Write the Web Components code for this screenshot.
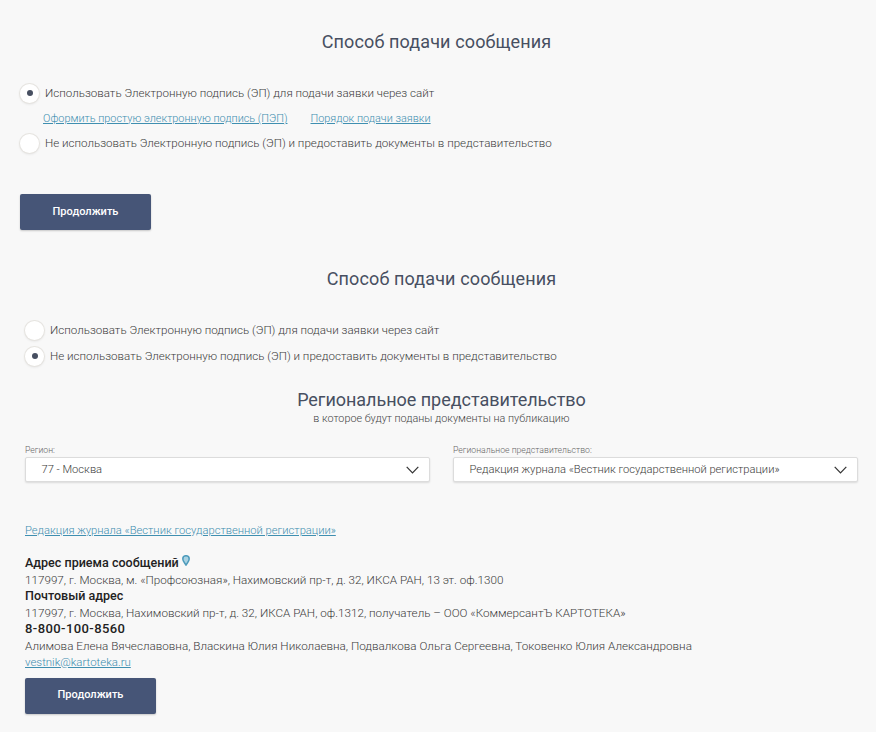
<!DOCTYPE html>
<html lang="ru">
<head>
<meta charset="utf-8">
<title>Способ подачи сообщения</title>
<style>
  html, body { margin: 0; padding: 0; background: #f8f8f8; }
  body { width: 876px; height: 732px; overflow: hidden; font-family: Roboto, "Noto Sans", sans-serif; }
</style>
</head>
<body>
<submit-section style="--left:20px; --top:31px; --head-gap:30px">
  <section-title>Способ подачи сообщения</section-title>
  <radio-row checked>Использовать Электронную подпись (ЭП) для подачи заявки через сайт</radio-row>
  <link-row>
    <a href="#">Оформить простую электронную подпись (ПЭП)</a>
    <a href="#">Порядок подачи заявки</a>
  </link-row>
  <radio-row style="--row-top:7px">Не использовать Электронную подпись (ЭП) и предоставить документы в представительство</radio-row>
  <action-button style="--btn-top:40px">Продолжить</action-button>
</submit-section>

<submit-section style="--left:25px; --top:38px; --head-gap:30px">
  <section-title>Способ подачи сообщения</section-title>
  <radio-row>Использовать Электронную подпись (ЭП) для подачи заявки через сайт</radio-row>
  <radio-row checked style="--row-top:4px">Не использовать Электронную подпись (ЭП) и предоставить документы в представительство</radio-row>
  <section-title sub="в которое будут поданы документы на публикацию" style="--title-top:22px">Региональное представительство</section-title>
  <select-pair>
    <select-box label="Регион:">77 - Москва</select-box>
    <select-box label="Региональное представительство:">Редакция журнала «Вестник государственной регистрации»</select-box>
  </select-pair>
  <office-card>
    <a slot="office" href="#">Редакция журнала «Вестник государственной регистрации»</a>
    <b>Адрес приема сообщений <map-pin></map-pin></b>
    <span>117997, г. Москва, м. «Профсоюзная», Нахимовский пр-т, д. 32, ИКСА РАН, 13 эт. оф.1300</span>
    <b>Почтовый адрес</b>
    <span>117997, г. Москва, Нахимовский пр-т, д. 32, ИКСА РАН, оф.1312, получатель – ООО «КоммерсантЪ КАРТОТЕКА»</span>
    <b class="phone">8-800-100-8560</b>
    <span>Алимова Елена Вячеславовна, Власкина Юлия Николаевна, Подвалкова Ольга Сергеевна, Токовенко Юлия Александровна</span>
    <a class="mail" href="#">vestnik@kartoteka.ru</a>
  </office-card>
  <action-button style="--btn-top:7px">Продолжить</action-button>
</submit-section>

<script>
// small helper, every element gets its own open shadow root
function define(name, html, extra) {
  class El extends HTMLElement {
    constructor() {
      super();
      this.attachShadow({ mode: 'open' }).innerHTML = html;
      if (extra) extra(this);
    }
  }
  customElements.define(name, El);
}

define('submit-section', `
  <style>
    :host { display: block; box-sizing: border-box; width: 833px; margin-left: var(--left); padding-top: var(--top); }
  </style>
  <slot></slot>`);

define('section-title', `
  <style>
    :host { display: block; text-align: center; margin-top: var(--title-top, 0); color: #474f61; }
    :host(:not([sub])) { margin-bottom: var(--head-gap); }
    .t { font-size: 18px; line-height: 21px; letter-spacing: .12px; }
    :host([sub]) .t { letter-spacing: -.03px; }
    .s { margin-top: 3px; font-size: 10.8px; line-height: 12px; font-weight: 300; color: #444; }
    .s:empty { display: none; }
  </style>
  <div class="t"><slot></slot></div>
  <div class="s"></div>`, el => {
    el.shadowRoot.querySelector('.s').textContent = el.getAttribute('sub') || '';
  });

define('radio-row', `
  <style>
    :host { display: flex; align-items: center; gap: 6px; height: 22px; margin-top: var(--row-top, 0);
      font-size: 11.6px; font-weight: 300; color: #3c3c3c; white-space: nowrap; }
    .dot { width: 19px; height: 19px; border-radius: 50%; background: #fff; box-shadow: 0 0 0 1px #e6e4e0, 0 1px 3px rgba(0,0,0,.12);
      display: flex; align-items: center; justify-content: center; flex: none; }
    :host([checked]) .dot::after { content: ""; width: 6px; height: 6px; border-radius: 50%; background: #474f61; }
  </style>
  <span class="dot"></span><span><slot></slot></span>`);

define('link-row', `
  <style>
    :host { display: flex; gap: 23px; margin: 8px 0 0 23px; font-size: 10.9px; line-height: 13px; font-weight: 300; }
    ::slotted(a) { color: #3f8fb0; text-decoration: underline; }
  </style>
  <slot></slot>`);

define('action-button', `
  <style>
    :host { display: flex; align-items: center; justify-content: center; box-sizing: border-box; width: 131px; height: 36px;
      padding-bottom: 2px; margin-top: var(--btn-top, 0); background: #465577; color: #fff; font-size: 11px; font-weight: 500;
      border-radius: 2px; box-shadow: 0 1px 2px rgba(0,0,0,.2); }
  </style>
  <slot></slot>`);

define('select-pair', `
  <style>
    :host { display: grid; grid-template-columns: 405px 405px; column-gap: 23px; margin-top: 20px; }
  </style>
  <slot></slot>`);

define('select-box', `
  <style>
    :host { display: block; }
    label { display: block; font-size: 8.7px; line-height: 10px; margin-bottom: 2px; font-weight: 300; color: #666; }
    .box { display: flex; align-items: center; justify-content: space-between; box-sizing: border-box; height: 25px; padding: 0 10px 0 15.5px;
      background: #fff; border: 1px solid #dcdcdc; border-radius: 2px; box-shadow: 0 1px 2px rgba(0,0,0,.12);
      font-size: 11.15px; font-weight: 300; color: #3c3c3c; white-space: nowrap; }
    svg { flex: none; }
  </style>
  <label></label>
  <div class="box"><span><slot></slot></span>
    <svg width="13" height="8" viewBox="0 0 13 8" fill="none" stroke="#333" stroke-width="1.2"><path d="M.7.8l5.8 6 5.8-6"/></svg>
  </div>`, el => {
    el.shadowRoot.querySelector('label').textContent = el.getAttribute('label');
  });

define('office-card', `
  <style>
    :host { display: block; margin-top: 42px; font-size: 11.68px; font-weight: 300; color: #3c3c3c; white-space: nowrap; }
    .office { display: block; margin-bottom: 17px; line-height: 14px; font-size: 11.18px; }
    .lines { display: flex; flex-direction: column; align-items: flex-start; line-height: 16.5px; }
    ::slotted(a) { color: #3f8fb0; text-decoration: underline; }
    ::slotted(.mail) { font-size: 11.45px; }
    ::slotted(b) { height: 16.5px; font-size: 12.55px; font-weight: 500; color: #222; }
    ::slotted(.phone) { font-size: 13px; letter-spacing: .42px; }
  </style>
  <div class="office"><slot name="office"></slot></div>
  <div class="lines"><slot></slot></div>`);

define('map-pin', `
  <style>:host { display: inline-block; line-height: 0; vertical-align: 1px; }</style>
  <svg width="8" height="11" viewBox="0 0 8 11" fill="#a9d2e2" stroke="#4f9cbc" stroke-width="1.5"><path d="M4 10C2.5 7.6 .8 6 .8 3.9a3.2 3.2 0 0 1 6.4 0C7.2 6 5.5 7.6 4 10z"/></svg>`);
</script>
</body>
</html>
